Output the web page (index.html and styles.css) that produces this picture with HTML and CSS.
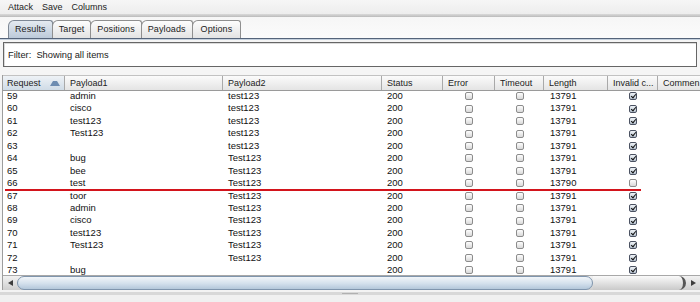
FILE: index.html
```html
<!DOCTYPE html>
<html lang="en">

<head>
    <meta charset="UTF-8">
    <title>Intruder attack - Results</title>
    <link rel="stylesheet" href="styles.css">
</head>

<body>
    <div class="window">
        <!-- Menu bar -->
        <div class="menubar">
            <span>Attack</span>
            <span>Save</span>
            <span>Columns</span>
        </div>

        <!-- Tabs -->
        <div class="tabs">
            <div class="tab active">Results</div>
            <div class="tab">Target</div>
            <div class="tab">Positions</div>
            <div class="tab">Payloads</div>
            <div class="tab">Options</div>
        </div>

        <div class="filter">Filter:&nbsp; Showing all items</div>

        <!-- Results table -->
        <div class="results">
            <div class="row thead">
                <div class="th sorted">Request <span class="arrow-up"></span></div>
                <div class="th">Payload1</div>
                <div class="th">Payload2</div>
                <div class="th">Status</div>
                <div class="th">Error</div>
                <div class="th">Timeout</div>
                <div class="th">Length</div>
                <div class="th">Invalid c...</div>
                <div class="th">Commen</div>
            </div>

            <div class="tbody">
                <div class="row first"><span>59</span><span>admin</span><span>test123</span><span>200</span><span class="c"><i class="cb"></i></span><span class="c"><i class="cb"></i></span><span class="len">13791</span><span class="c"><i class="cb on"></i></span><span></span></div>
                <div class="row"><span>60</span><span>cisco</span><span>test123</span><span>200</span><span class="c"><i class="cb"></i></span><span class="c"><i class="cb"></i></span><span class="len">13791</span><span class="c"><i class="cb on"></i></span><span></span></div>
                <div class="row"><span>61</span><span>test123</span><span>test123</span><span>200</span><span class="c"><i class="cb"></i></span><span class="c"><i class="cb"></i></span><span class="len">13791</span><span class="c"><i class="cb on"></i></span><span></span></div>
                <div class="row"><span>62</span><span>Test123</span><span>test123</span><span>200</span><span class="c"><i class="cb"></i></span><span class="c"><i class="cb"></i></span><span class="len">13791</span><span class="c"><i class="cb on"></i></span><span></span></div>
                <div class="row"><span>63</span><span></span><span>test123</span><span>200</span><span class="c"><i class="cb"></i></span><span class="c"><i class="cb"></i></span><span class="len">13791</span><span class="c"><i class="cb on"></i></span><span></span></div>
                <div class="row"><span>64</span><span>bug</span><span>Test123</span><span>200</span><span class="c"><i class="cb"></i></span><span class="c"><i class="cb"></i></span><span class="len">13791</span><span class="c"><i class="cb on"></i></span><span></span></div>
                <div class="row"><span>65</span><span>bee</span><span>Test123</span><span>200</span><span class="c"><i class="cb"></i></span><span class="c"><i class="cb"></i></span><span class="len">13791</span><span class="c"><i class="cb on"></i></span><span></span></div>
                <div class="row"><span>66</span><span>test</span><span>Test123</span><span>200</span><span class="c"><i class="cb"></i></span><span class="c"><i class="cb"></i></span><span class="len">13790</span><span class="c"><i class="cb"></i></span><span></span></div>
                <div class="row"><span>67</span><span>toor</span><span>Test123</span><span>200</span><span class="c"><i class="cb"></i></span><span class="c"><i class="cb"></i></span><span class="len">13791</span><span class="c"><i class="cb on"></i></span><span></span></div>
                <div class="row"><span>68</span><span>admin</span><span>Test123</span><span>200</span><span class="c"><i class="cb"></i></span><span class="c"><i class="cb"></i></span><span class="len">13791</span><span class="c"><i class="cb on"></i></span><span></span></div>
                <div class="row"><span>69</span><span>cisco</span><span>Test123</span><span>200</span><span class="c"><i class="cb"></i></span><span class="c"><i class="cb"></i></span><span class="len">13791</span><span class="c"><i class="cb on"></i></span><span></span></div>
                <div class="row"><span>70</span><span>test123</span><span>Test123</span><span>200</span><span class="c"><i class="cb"></i></span><span class="c"><i class="cb"></i></span><span class="len">13791</span><span class="c"><i class="cb on"></i></span><span></span></div>
                <div class="row"><span>71</span><span>Test123</span><span>Test123</span><span>200</span><span class="c"><i class="cb"></i></span><span class="c"><i class="cb"></i></span><span class="len">13791</span><span class="c"><i class="cb on"></i></span><span></span></div>
                <div class="row"><span>72</span><span></span><span>Test123</span><span>200</span><span class="c"><i class="cb"></i></span><span class="c"><i class="cb"></i></span><span class="len">13791</span><span class="c"><i class="cb on"></i></span><span></span></div>
                <div class="row"><span>73</span><span>bug</span><span></span><span>200</span><span class="c"><i class="cb"></i></span><span class="c"><i class="cb"></i></span><span class="len">13791</span><span class="c"><i class="cb on"></i></span><span></span></div>

                <!-- red marker drawn over the rows -->
                <div class="marker"></div>
            </div>

            <!-- horizontal scrollbar -->
            <div class="hscroll">
                <div class="btn"><span class="tri-left"></span></div>
                <div class="track">
                    <div class="thumb"></div>
                    <div class="rest"></div>
                </div>
                <div class="btn"><span class="tri-right"></span></div>
            </div>
        </div>

        <div class="footer"><span class="grip"></span></div>
    </div>
</body>
</html>
```

FILE: styles.css
```css
body {
    margin: 0;
    font-family: "Liberation Sans", Arial, sans-serif;
    font-size: 9px;
    color: #1b1b1b;
    background-color: #f2f2f2;
}

.window {
    width: 700px;
    height: 302px;
    overflow: hidden;
    display: flex;
    flex-direction: column;
    background: #f5f5f5;
}

/* menu */
.menubar {
    height: 14px;
    display: flex;
    align-items: center;
    gap: 9px;
    padding-left: 8px;
    background: linear-gradient(#f6f6f6, #ededed);
    color: #222;
}

/* tabs */
.tabs {
    display: flex;
    padding: 6px 0 0 8px;
    background: linear-gradient(#d9d9d9 0, #c6c6c6 2px, #b9b9b9 3px, #f6f6f6 3px, #fbfbfb 100%);
    border-bottom: 1px solid #55647a;
    box-shadow: 0 1px 0 #c4d0dd;
}

.tab {
    height: 17px;
    line-height: 17px;
    padding: 0 6px;
    margin-right: -1px;
    border: 1px solid #8f8f8f;
    border-bottom: none;
    border-radius: 6px 3px 0 0;
    background: linear-gradient(#fdfdfd, #e3e3e3);
    color: #222;
    letter-spacing: 0.1px;
}

.tab:last-child {
    padding: 0 8px;
}

.tab.active {
    background: linear-gradient(#e4eaf0, #bccada);
    border-color: #7d8794;
}

/* filter */
.filter {
    margin: 3px 3px 0 3px;
    height: 23px;
    display: flex;
    align-items: center;
    padding-left: 4px;
    border: 1px solid #666;
    background: #fff;
    box-shadow: inset 1px 1px 0 #dadada;
    font-size: 9.3px;
    color: #222;
}

/* table */
.results {
    margin: 8px 0 0 2px;
    flex: 1;
    min-height: 0;
    display: flex;
    flex-direction: column;
    border-left: 1px solid #9d9d9d;
    background: #fff;
}

.row {
    display: grid;
    grid-template-columns: 62px 158px 159px 61px 52px 49px 64px 50px 90px;
    height: 12.45px;
    line-height: 12.45px;
    font-size: 9.5px;
    white-space: nowrap;
}

.row span {
    padding-left: 5px;
    overflow: hidden;
}

.row span:first-child {
    padding-left: 4px;
}

.row span.len {
    padding-left: 6px;
}

.row span.c {
    padding-left: 0;
    display: flex;
    justify-content: center;
    align-items: center;
}

.thead {
    height: 14px;
    line-height: 14px;
    font-size: 9px;
    border-top: 1px solid #c2c2c2;
    border-bottom: 1px solid #9a9a9a;
    background: linear-gradient(#fbfbfb, #e4e4e4);
    color: #222;
    position: relative;
    z-index: 1;
}

.th {
    padding-left: 5px;
    border-right: 1px solid #a9a9a9;
    overflow: hidden;
}

.th:first-child {
    padding-left: 4px;
}

.th.sorted {
    display: flex;
    justify-content: space-between;
    align-items: center;
    padding-right: 4px;
    background: linear-gradient(#eef2f6, #cfdbe6);
}

.arrow-up {
    width: 0;
    height: 0;
    border-left: 3px solid transparent;
    border-right: 3px solid transparent;
    border-bottom: 5px solid #6d8cb1;
}

.tbody {
    flex: 1;
    min-height: 0;
    overflow: hidden;
    position: relative;
    color: #111;
}

.row.first {
    margin-top: -1px;
}

.cb {
    display: block;
    width: 8px;
    height: 8px;
    box-sizing: border-box;
    border: 1px solid #8c8c8c;
    border-radius: 2px;
    background: linear-gradient(#fdfdfd, #d9d9d9);
    position: relative;
}

.cb.on {
    border-color: #4b5262;
    background: linear-gradient(#eef2f6, #b9c5d2);
}

.cb.on::after {
    content: "";
    position: absolute;
    left: 2px;
    top: 0;
    width: 2px;
    height: 4px;
    border-right: 1.5px solid #111;
    border-bottom: 1.5px solid #111;
    transform: rotate(40deg);
}

.marker {
    position: absolute;
    left: 2px;
    top: 98px;
    width: 636px;
    height: 2px;
    background: #d3141c;
}

/* scrollbar */
.hscroll {
    height: 14px;
    display: flex;
    border-top: 1px solid #a8a8a8;
    background: linear-gradient(#f2f2f2, #cfcfcf);
}

.btn {
    width: 14px;
    display: flex;
    align-items: center;
    justify-content: center;
}

.tri-left {
    width: 0;
    height: 0;
    border-top: 3px solid transparent;
    border-bottom: 3px solid transparent;
    border-right: 5px solid #3d3d3d;
}

.tri-right {
    width: 0;
    height: 0;
    border-top: 3px solid transparent;
    border-bottom: 3px solid transparent;
    border-left: 5px solid #3d3d3d;
}

.track {
    flex: 1;
    display: flex;
}

.thumb {
    width: 576px;
    box-sizing: border-box;
    border: 1px solid #7f95ad;
    border-radius: 7px;
    background: linear-gradient(#f1f5f9, #d3e0ec 55%, #b3c7da);
}

.rest {
    flex: 1;
    border-radius: 0 7px 7px 0;
    border-right: 3px solid #555;
    background: linear-gradient(#fafafa, #c9c9c9);
}

.footer {
    height: 12px;
    background: linear-gradient(#f3f3f3 0, #f3f3f3 2px, #d8d8d8 2px, #d8d8d8 5px, #f0f0f0 5px);
    display: flex;
    justify-content: center;
}

.grip {
    width: 16px;
    height: 1px;
    margin-top: 3px;
    background: #b0b0b0;
}
```
